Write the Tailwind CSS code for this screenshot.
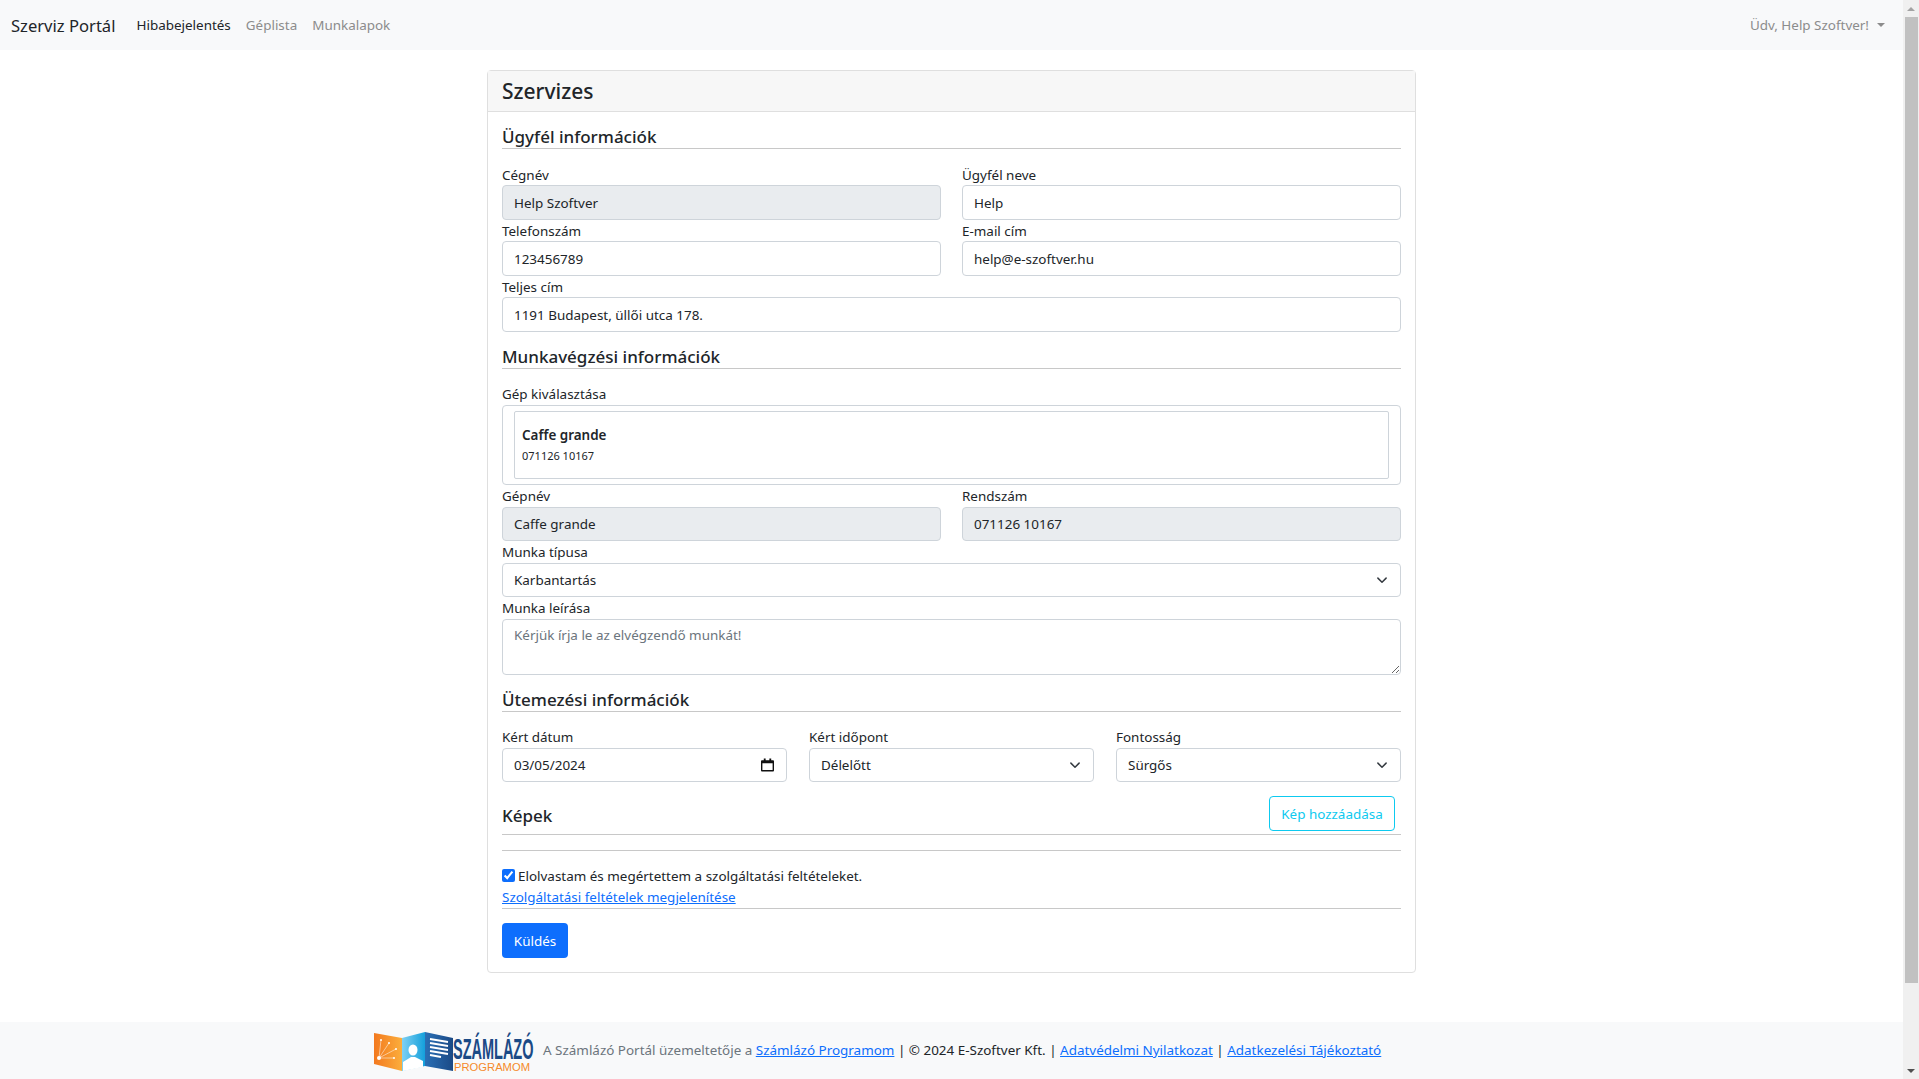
<!DOCTYPE html>
<html lang="hu">
<head>
  <meta charset="UTF-8">
  <title>Szerviz Portál</title>
  <script src="https://cdn.jsdelivr.net/npm/@tailwindcss/browser@4"></script>
</head>
<body class="bg-white text-[#212529] text-[13.44px] leading-[21px] font-['Noto_Sans','Open_Sans',sans-serif]">
  <div class="flex h-[1079px] w-[1919px] overflow-hidden">
    <div class="w-[1903px] shrink-0 flex flex-col">
      <!-- Navbar -->
      <nav class="h-[50px] bg-[#f8f9fa] flex items-center pl-[11px] pr-[18px]">
        <a class="text-[16.6px] mr-[21px]">Szerviz Portál</a>
        <a class="mr-[15px]">Hibabejelentés</a>
        <a class="mr-[15px] text-[#8c8c8c]">Géplista</a>
        <a class="text-[#8c8c8c]">Munkalapok</a>
        <div class="ml-auto flex items-center text-[#8c8c8c]">
          Üdv, Help Szoftver!
          <span class="ml-[8px] w-0 h-0 border-x-[4px] border-x-transparent border-t-[4px] border-t-[#8c8c8c]"></span>
        </div>
      </nav>

      <!-- Card -->
      <div class="w-[929px] h-[903px] mt-[20px] ml-[487px] shrink-0 border border-[#dfdfdf] rounded-[4px]">
        <div class="h-[41px] bg-[#f7f7f7] border-b border-[#dfdfdf] px-[14px] flex items-center text-[21px] font-medium">Szervizes</div>
        <div class="px-[14px]">

          <h5 class="text-[17px] font-medium h-[37px] pt-[14px] leading-[22px] border-b border-[#c8c8c8]">Ügyfél információk</h5>

          <div class="grid grid-cols-2 gap-x-[21px] mt-[15px]">
            <div><label class="block h-[21px] pt-[1px]">Cégnév</label><input disabled value="Help Szoftver" class="w-full h-[35px] px-[11px] border border-[#ced4da] rounded-[4px] bg-[#e9ecef]"></div>
            <div><label class="block h-[21px] pt-[1px]">Ügyfél neve</label><input value="Help" class="w-full h-[35px] px-[11px] border border-[#ced4da] rounded-[4px]"></div>
            <div><label class="block h-[21px] pt-[1px]">Telefonszám</label><input value="123456789" class="w-full h-[35px] px-[11px] border border-[#ced4da] rounded-[4px]"></div>
            <div><label class="block h-[21px] pt-[1px]">E-mail cím</label><input value="help@e-szoftver.hu" class="w-full h-[35px] px-[11px] border border-[#ced4da] rounded-[4px]"></div>
            <div class="col-span-2"><label class="block h-[21px] pt-[1px]">Teljes cím</label><input value="1191 Budapest, üllői utca 178." class="w-full h-[35px] px-[11px] border border-[#ced4da] rounded-[4px]"></div>
          </div>

          <h5 class="text-[17px] font-medium h-[37px] pt-[14px] leading-[22px] border-b border-[#c8c8c8]">Munkavégzési információk</h5>

          <div class="mt-[15px]">
            <label class="block h-[21px]">Gép kiválasztása</label>
            <div class="h-[80px] border border-[#ced4da] rounded-[4px] pt-[5px] px-[11px]">
              <div class="h-[68px] border border-[#ced4da] rounded-[2px] px-[7px] pt-[13px]">
                <div class="font-semibold leading-[21px]">Caffe grande</div>
                <div class="text-[11px] leading-[20px]">071126 10167</div>
              </div>
            </div>
          </div>

          <div class="grid grid-cols-2 gap-x-[21px]">
            <div><label class="block h-[22px] pt-[1px]">Gépnév</label><input disabled value="Caffe grande" class="w-full h-[34px] px-[11px] border border-[#ced4da] rounded-[4px] bg-[#e9ecef]"></div>
            <div><label class="block h-[22px] pt-[1px]">Rendszám</label><input disabled value="071126 10167" class="w-full h-[34px] px-[11px] border border-[#ced4da] rounded-[4px] bg-[#e9ecef]"></div>
          </div>

          <label class="block h-[22px] pt-[1px]">Munka típusa</label>
          <div class="relative h-[34px] px-[11px] border border-[#ced4da] rounded-[4px] flex items-center">
            Karbantartás
            <svg class="absolute right-[12px] top-[10px]" width="12" height="12" viewBox="0 0 16 16" fill="none" stroke="#343a40" stroke-width="2" stroke-linecap="round" stroke-linejoin="round"><path d="M2.5 5.5l5.5 5.5 5.5-5.5"/></svg>
          </div>

          <label class="block h-[22px] pt-[1px]">Munka leírása</label>
          <textarea placeholder="Kérjük írja le az elvégzendő munkát!" class="block w-full h-[56px] px-[11px] py-[5px] border border-[#ced4da] rounded-[4px] placeholder:text-[#6c757d]"></textarea>

          <h5 class="text-[17px] font-medium h-[37px] pt-[14px] leading-[22px] border-b border-[#c8c8c8]">Ütemezési információk</h5>

          <div class="grid grid-cols-3 gap-x-[22px] mt-[15px]">
            <div>
              <label class="block h-[21px]">Kért dátum</label>
              <div class="relative h-[34px] px-[11px] border border-[#ced4da] rounded-[4px] flex items-center">
                03/05/2024
                <svg class="absolute right-[12px] top-[9px]" width="13" height="14" viewBox="0 0 14 14"><path fill="#111" fill-rule="evenodd" d="M1 2h2V0h2v2h4V0h2v2h2a1 1 0 0 1 1 1v10a1 1 0 0 1-1 1H1a1 1 0 0 1-1-1V3a1 1 0 0 1 1-1zm.5 3v7.5h11V5z"/></svg>
              </div>
            </div>
            <div>
              <label class="block h-[21px]">Kért időpont</label>
              <div class="relative h-[34px] px-[11px] border border-[#ced4da] rounded-[4px] flex items-center">
                Délelőtt
                <svg class="absolute right-[12px] top-[10px]" width="12" height="12" viewBox="0 0 16 16" fill="none" stroke="#343a40" stroke-width="2" stroke-linecap="round" stroke-linejoin="round"><path d="M2.5 5.5l5.5 5.5 5.5-5.5"/></svg>
              </div>
            </div>
            <div>
              <label class="block h-[21px]">Fontosság</label>
              <div class="relative h-[34px] px-[11px] border border-[#ced4da] rounded-[4px] flex items-center">
                Sürgős
                <svg class="absolute right-[12px] top-[10px]" width="12" height="12" viewBox="0 0 16 16" fill="none" stroke="#343a40" stroke-width="2" stroke-linecap="round" stroke-linejoin="round"><path d="M2.5 5.5l5.5 5.5 5.5-5.5"/></svg>
              </div>
            </div>
          </div>

          <div class="flex items-center justify-between h-[53px] pt-[14px] border-b border-[#c8c8c8]">
            <span class="text-[17px] font-medium">Képek</span>
            <button class="self-start w-[126px] h-[35px] pt-[1px] mr-[6px] border border-[#0dcaf0] rounded-[4px] text-[#0dcaf0]">Kép hozzáadása</button>
          </div>
          <div class="h-[16px] border-b border-[#c8c8c8]"></div>

          <label class="flex items-center h-[21px] mt-[15px]">
            <input type="checkbox" checked class="w-[13px] h-[13px] mr-[3px] mt-[-2px] accent-[#0d6efd]">
            Elolvastam és megértettem a szolgáltatási feltételeket.
          </label>
          <a class="block h-[21px] text-[#0d6efd] underline">Szolgáltatási feltételek megjelenítése</a>
          <div class="border-b border-[#c8c8c8]"></div>
          <button class="block mt-[14px] w-[66px] h-[35px] pt-[1px] bg-[#0d6efd] text-white rounded-[4px]">Küldés</button>
        </div>
      </div>

      <!-- Footer -->
      <footer class="mt-auto h-[57px] bg-[#f8f9fa] flex items-center pl-[370px] text-[#6c757d]">
        <svg width="170" height="50" viewBox="0 0 170 50" class="mr-[3px] shrink-0">
          <defs>
            <linearGradient id="orange" x1="0" x2="1" y1="0" y2="0"><stop offset="0" stop-color="#f3791f"/><stop offset="1" stop-color="#fbae3c"/></linearGradient>
            <linearGradient id="blue" x1="0" x2="1" y1="0" y2="0"><stop offset="0" stop-color="#7fd0f2"/><stop offset="1" stop-color="#14a0dc"/></linearGradient>
            <linearGradient id="navy" x1="0" x2="1" y1="0" y2="0"><stop offset="0" stop-color="#2a6fb5"/><stop offset="1" stop-color="#1b4a86"/></linearGradient>
          </defs>
          <path d="M4 7 L32 12 V45 L4 38 Z" fill="url(#orange)"/>
          <path d="M32 12 L55 6 V40 L32 45 Z" fill="url(#blue)"/>
          <path d="M55 6 L83 12 V45 L55 40 Z" fill="url(#navy)"/>
          <g stroke="#fff" stroke-width="0.6" opacity="0.85">
            <path d="M9 32 L11 14 M9 32 L19 17 M9 32 L26 23 M9 32 L24 32"/>
          </g>
          <g fill="#fff">
            <circle cx="9" cy="32" r="2"/><circle cx="11" cy="14" r="1"/><circle cx="19" cy="17" r="1"/><circle cx="26" cy="23" r="1"/><circle cx="24" cy="32" r="1"/>
          </g>
          <path d="M60 13 L78 16 M60 17 L78 20 M60 21 L78 24 M60 25 L78 28 M60 29 L71 31" stroke="#fff" stroke-width="1.8"/>
          <ellipse cx="43" cy="24" rx="4.5" ry="5.5" fill="#fff"/>
          <path d="M33 45 L33 36 Q38 33 41 31 H45 Q49 33 53 35 V41 Z" fill="#fff"/>
          <text transform="translate(83 33) scale(0.5 1)" font-family="Liberation Sans" font-size="29" font-weight="700" fill="#1b4a86">SZÁMLÁZÓ</text>
          <text transform="translate(84 44.5) scale(1.1 1)" font-family="Liberation Sans" font-size="10.2" fill="#f58a2a">PROGRAMOM</text>
        </svg>
        <span>A Számlázó Portál üzemeltetője a <a class="text-[#0d6efd] underline">Számlázó Programom</a> <span class="text-[#212529]">| © 2024 E-Szoftver Kft. |</span> <a class="text-[#0d6efd] underline">Adatvédelmi Nyilatkozat</a> <span class="text-[#212529]">|</span> <a class="text-[#0d6efd] underline">Adatkezelési Tájékoztató</a></span>
      </footer>
    </div>

    <!-- Scrollbar -->
    <div class="w-[16px] shrink-0 bg-[#f0f0f0] flex flex-col">
      <div class="h-[17px] flex items-center justify-center"><span class="w-0 h-0 border-x-[4px] border-x-transparent border-b-[4px] border-b-[#a3a3a3]"></span></div>
      <div class="ml-[2px] w-[13px] h-[966px] bg-[#c1c1c1]"></div>
      <div class="mt-auto h-[17px] flex items-center justify-center"><span class="w-0 h-0 border-x-[4px] border-x-transparent border-t-[4px] border-t-[#505050]"></span></div>
    </div>
  </div>
</body>
</html>
